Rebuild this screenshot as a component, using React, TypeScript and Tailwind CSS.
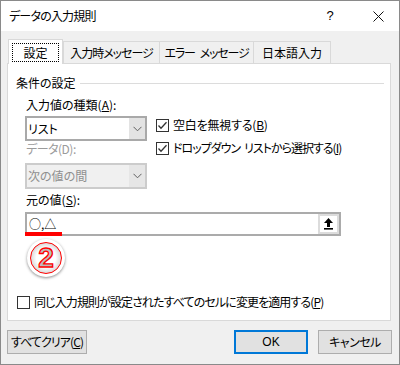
import React from "react";

function Check({ checked }: { checked?: boolean }) {
  return (
    <div className="w-[13px] h-[13px] border border-[#333333] bg-white flex items-center justify-center shrink-0">
      {checked && (
        <svg width="11" height="11" viewBox="0 0 11 11">
          <polyline points="1.5,5.5 4,8.2 9.5,2.2" fill="none" stroke="#333333" strokeWidth="1.3" />
        </svg>
      )}
    </div>
  );
}

function Chevron() {
  return (
    <svg width="9" height="6" viewBox="0 0 9 6">
      <polyline points="0.5,0.8 4.5,4.8 8.5,0.8" fill="none" stroke="#606060" strokeWidth="1" />
    </svg>
  );
}

function Gap({ w }: { w: string }) {
  return <span className={`inline-block ${w}`}> </span>;
}

export default function App() {
  return (
    <div className="w-[400px] h-[365px] border border-[#8a8a8a] bg-[#f0f0f0] flex flex-col text-[12px] text-black font-['Noto_Sans_CJK_JP',sans-serif] [font-feature-settings:'palt'] whitespace-nowrap overflow-hidden">
      {/* Title bar */}
      <div className="h-[30px] bg-white flex items-center shrink-0">
        <span className="pl-[8px] leading-[16px] tracking-[-0.8px]">データの入力規則</span>
        <div className="ml-auto flex items-center h-full">
          <div className="w-[40px] text-center text-[13px] font-['Liberation_Sans',sans-serif]">?</div>
          <div className="w-[7px]" />
          <div className="w-[42px] flex items-center justify-center">
            <svg width="11" height="11" viewBox="0 0 11 11">
              <line x1="0.5" y1="0.5" x2="10.5" y2="10.5" stroke="#111" strokeWidth="1" />
              <line x1="10.5" y1="0.5" x2="0.5" y2="10.5" stroke="#111" strokeWidth="1" />
            </svg>
          </div>
        </div>
      </div>

      {/* Body */}
      <div className="flex-1 flex flex-col px-[6px]">
        {/* Tabs */}
        <div className="mt-[8px] h-[25px] flex items-end pl-[1px]">
          <div className="relative z-10 w-[55px] h-[25px] border-l border-t border-r border-[#d9d9d9] bg-white flex justify-center items-start pt-[3px]">
            <span className="w-[47px] h-[19px] border border-dotted border-black flex items-center justify-center leading-none">設定</span>
          </div>
          <div className="w-[97px] h-[22px] mb-[1px] border-l border-t border-r border-[#d9d9d9] flex items-center justify-center leading-none tracking-[-1px]">入力時メッセージ</div>
          <div className="w-[94px] h-[22px] mb-[1px] border-t border-r border-[#d9d9d9] flex items-center justify-center leading-none tracking-[-1.2px]">
            <span>エラー</span>
            <Gap w="w-[5px]" />
            <span>メッセージ</span>
          </div>
          <div className="w-[77px] h-[22px] mb-[1px] border-t border-r border-[#d9d9d9] flex items-center justify-center leading-none">日本語入力</div>
        </div>

        {/* Panel */}
        <div className="-mt-px w-[384px] h-[258px] border border-[#d9d9d9] bg-white flex flex-col">
          <div className="mt-[11px] h-[16px] flex items-center pl-[8px]">
            <span className="leading-[16px]">条件の設定</span>
            <div className="flex-1 h-px bg-[#dcdcdc] ml-[4px] mr-[6px]" />
          </div>
          <div className="mt-[6px] pl-[18px] leading-[16px] h-[16px]">
            入力値の種類(<u className="underline-offset-[1px]">A</u>):
          </div>

          <div className="mt-[3px] flex pl-[17px]">
            <div className="w-[122px] flex flex-col">
              <div className="h-[25px] border-2 border-[#a9a9a9] bg-white flex">
                <div className="flex-1 flex items-center pl-[1px] leading-none">リスト</div>
                <div className="w-[16px] bg-[#e3e3e3] flex items-center justify-center">
                  <Chevron />
                </div>
              </div>
              <div className="h-[16px] leading-[16px] pl-[1px] text-[#9b9b9b] tracking-[-0.5px]">データ(D):</div>
              <div className="mt-[6px] h-[26px] border-2 border-[#cccccc] bg-[#f0f0f0] flex">
                <div className="flex-1 flex items-center pl-[1px] leading-none text-[#8f8f8f]">次の値の間</div>
                <div className="w-[16px] bg-[#e6e6e6] flex items-center justify-center">
                  <Chevron />
                </div>
              </div>
            </div>
            <div className="ml-[9px] pt-[1px] flex flex-col gap-[7px]">
              <div className="h-[16px] flex items-center gap-[4px]">
                <Check checked />
                <span className="leading-[16px] tracking-[-0.2px]">
                  空白を無視する(<u className="underline-offset-[1px]">B</u>)
                </span>
              </div>
              <div className="h-[16px] flex items-center gap-[4px]">
                <Check checked />
                <span className="leading-[16px] tracking-[-1px]">
                  ドロップダウン<Gap w="w-[4px]" />リストから選択する(<u className="underline-offset-[1px]">I</u>)
                </span>
              </div>
            </div>
          </div>

          <div className="mt-[3px] pl-[18px] leading-[16px] h-[16px]">
            元の値(<u className="underline-offset-[1px]">S</u>):
          </div>

          <div className="relative mt-[4px] ml-[17px] w-[316px] h-[24px]">
            <div className="w-full h-full border-2 border-[#ababab] bg-white flex">
              <div className="flex-1 flex items-center pl-[2px] leading-none">○,△</div>
              <div className="w-[21px] bg-[#dcdcdc] p-[2px]">
                <div className="w-full h-full bg-white flex items-center justify-center">
                  <svg width="9" height="12" viewBox="0 0 9 12">
                    <polygon points="4.5,0 9,5 0,5" fill="#000" />
                    <rect x="3" y="5" width="3" height="4" fill="#000" />
                    <rect x="0" y="10" width="9" height="1.6" fill="#000" />
                  </svg>
                </div>
              </div>
            </div>
            <div className="absolute left-0 bottom-0 w-[37px] h-[4px] bg-[#ff0000]" />
          </div>

          <div className="mt-[3px] ml-[19px] w-[38px] h-[38px] rounded-full bg-white shadow-[0_1px_3px_rgba(0,0,0,0.45)] flex items-center justify-center">
            <div className="w-[32px] h-[32px] rounded-full border-[1.5px] border-[#ff0000] bg-[radial-gradient(circle,#ffffff_45%,#b0b0b0_100%)] flex items-center justify-center">
              <span className="text-[28px] font-bold leading-none text-[#bdbdbd] [-webkit-text-stroke:1.3px_#ff0000] font-['Liberation_Sans',sans-serif]">
                2
              </span>
            </div>
          </div>

          <div className="mt-[17px] h-[16px] pl-[9px] flex items-center gap-[4px]">
            <Check />
            <span className="leading-[16px] tracking-[-0.9px]">
              同じ入力規則が設定されたすべてのセルに変更を適用する(<u className="underline-offset-[1px]">P</u>)
            </span>
          </div>
        </div>

        {/* Buttons */}
        <div className="mt-[9px] h-[24px] flex mr-[1px]">
          <div className="w-[80px] h-full bg-[#e1e1e1] border border-[#adadad] flex items-center justify-center leading-none tracking-[-0.9px]">
            すべてクリア(<u className="underline-offset-[1px]">C</u>)
          </div>
          <div className="ml-auto w-[74px] h-full bg-[#e1e1e1] border-2 border-[#0078d7] flex items-center justify-center leading-none font-['Liberation_Sans',sans-serif]">
            OK
          </div>
          <div className="ml-[10px] w-[74px] h-full bg-[#e1e1e1] border border-[#adadad] flex items-center justify-center leading-none tracking-[-0.5px]">
            キャンセル
          </div>
        </div>
      </div>
    </div>
  );
}
